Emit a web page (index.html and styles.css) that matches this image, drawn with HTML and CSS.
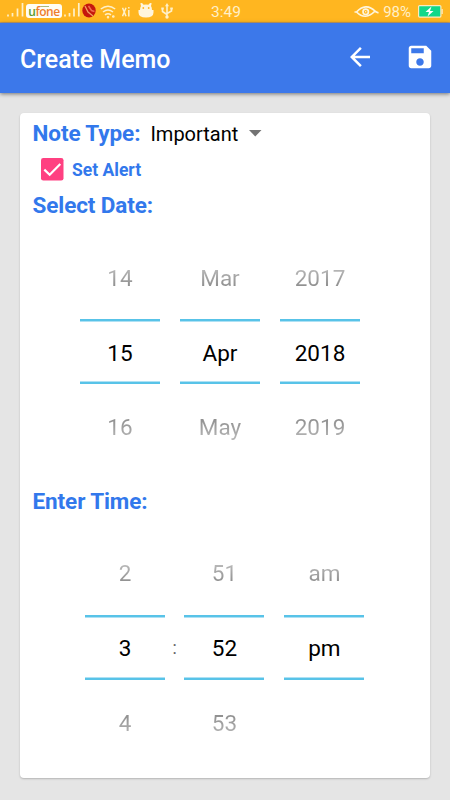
FILE: index.html
```html
<!DOCTYPE html>
<html lang="en">
<head>
<meta charset="utf-8">
<title>Create Memo</title>
<link rel="stylesheet" href="styles.css">
</head>
<body>
<div class="status">
  <div class="status-left">
    <svg class="signal" width="18" height="14" viewBox="0 0 18 14"><path d="M1 11.500v2M5.500 10v3.500M10.500 5.500v8M15.500 0v13.500" stroke="#fff0c8" stroke-width="1.700"/></svg>
    <span class="carrier"><small></small><b><i class="g">u</i><i class="o">fone</i></b></span>
    <svg class="signal second" width="17" height="14" viewBox="0 0 17 14"><path d="M1 11.500v2M5.500 10v3.500M10 5.500v8M14.800 0v13.500" stroke="#fff0c8" stroke-width="1.700"/></svg>
    <svg class="ball" width="14" height="15" viewBox="0 0 14 15"><ellipse cx="7" cy="7.500" rx="6.700" ry="7" fill="#c5170d"/><path d="M3 3L6 9L11 13" fill="none" stroke="#f0a060" stroke-width="1.300"/><path d="M6.500 3l3 4.500 3 1" fill="none" stroke="#f06b50" stroke-width="1.500"/></svg>
    <svg class="wifi" width="16" height="14" viewBox="0 0 16 14" fill="none" stroke="#fff0c8" stroke-width="1.500"><path d="M.8 4Q8-1.500 15.200 4M3 7Q8 3 13 7M5 9.800Q8 7.500 11 9.800"/><circle cx="8" cy="12.300" r=".5"/><circle cx="13.300" cy="11.500" r=".6"/></svg>
    <svg class="arrows" width="8" height="10" viewBox="0 0 8 10" fill="none" stroke="#fff0c8" stroke-width="1.500"><path d="M.500.700L4 9.300M4 .700L.500 9.300M6.800 3v6.500M6.800 0v1.500"/></svg>
    <svg class="cat" width="16" height="15" viewBox="0 0 16 15"><path d="M2.300.300L4 0L5.600 1.800Q8 1.200 10.400 1.800L12 0L13.700.300L13 3Q14 4.500 14 7H15.500V9.500Q15.500 14.500 8 14.500Q.500 14.500.500 9.500V7H2Q2 4.500 3 3Z" fill="#fff5dc"/><circle cx="5.300" cy="5" r=".9" fill="#ffb620"/><circle cx="10.700" cy="5" r=".9" fill="#ffb620"/></svg>
    <svg class="usb" width="12" height="16" viewBox="0 0 12 16" fill="none" stroke="#fff0c8" stroke-width="1.600"><path d="M6 2v12M6 11.500L1.500 8.500V5.500M6 10.500L10.500 8V5"/><path d="M6 0L4 3.200h4ZM.3 4.500h2.500v2H.3ZM9.300 4.500h2.500v2H9.300Z" fill="#fff0c8" stroke="none"/><circle cx="6" cy="14" r="1.700" fill="#fff0c8" stroke="none"/></svg>
  </div>
  <span class="clock">3:49</span>
  <div class="status-right">
    <svg width="25" height="12" viewBox="0 0 25 12" fill="none" stroke="#fff5dc" stroke-width="1.700"><path d="M.5 6H2.500Q11.500-3.800 21 5Q22 6.200 24.500 6.800M2.500 6Q11.500 15 21 5"/><circle cx="11.700" cy="5.800" r="2.700"/><circle cx="11.700" cy="5.800" r=".7" fill="#fff5dc" stroke="none"/></svg>
    <span class="percent">98%</span>
    <svg class="battery" width="25" height="13" viewBox="0 0 25 13"><rect x=".6" y=".6" width="22.300" height="11.500" rx="1" fill="#12d889" stroke="#ffe9bd" stroke-width="1.200"/><path d="M23.500 4h1.300v5h-1.300Z" fill="#ffe9bd"/><path d="M13.500 1.500L7.500 7H11L9.500 11.500L15.500 6H12Z" fill="#fff"/></svg>
  </div>
</div>
<header class="bar">
  <h1>Create Memo</h1>
  <svg class="back" width="30" height="30" viewBox="0 0 24 24"><path d="M20 11H7.830l5.590-5.590L12 4l-8 8 8 8 1.410-1.410L7.830 13H20z" fill="#fff"/></svg>
  <svg class="save" width="30" height="30" viewBox="0 0 24 24"><path d="M17 3H5c-1.110 0-2 .9-2 2v14c0 1.100.89 2 2 2h14c1.100 0 2-.9 2-2V7l-4-4zm-5 16c-1.660 0-3-1.340-3-3s1.340-3 3-3 3 1.340 3 3-1.340 3-3 3zm3-10H5V5h10v4z" fill="#fff"/></svg>
</header>
<main class="card">
  <div class="type-row">
    <span class="label">Note Type:</span>
    <span class="select">Important</span>
    <svg width="13" height="7" viewBox="0 0 13 7"><path d="M0 0H12.500L6.250 6.500Z" fill="#737373"/></svg>
  </div>
  <div class="alert-row">
    <svg width="23" height="23" viewBox="0 0 23 23"><rect width="22.500" height="22.500" rx="2.300" fill="#ff4081"/><path d="M3.300 11.600L8.700 16.800L19.300 6" fill="none" stroke="#fff" stroke-width="2.200"/></svg>
    <span>Set Alert</span>
  </div>
  <div class="label date-label">Select Date:</div>
  <div class="pickers date">
    <div class="picker"><span class="prev">14</span><span class="value">15</span><span class="next">16</span></div>
    <div class="picker"><span class="prev">Mar</span><span class="value">Apr</span><span class="next">May</span></div>
    <div class="picker"><span class="prev">2017</span><span class="value">2018</span><span class="next">2019</span></div>
  </div>
  <div class="label time-label">Enter Time:</div>
  <div class="pickers time">
    <div class="picker"><span class="prev">2</span><span class="value">3</span><span class="next">4</span></div>
    <span class="colon">:</span>
    <div class="picker"><span class="prev">51</span><span class="value">52</span><span class="next">53</span></div>
    <div class="picker meridiem"><span class="prev">am</span><span class="value">pm</span><span class="next"></span></div>
  </div>
</main>
</body>
</html>
```
FILE: styles.css
```css
* { box-sizing: border-box; }
body {
  margin: 0;
  width: 450px;
  height: 800px;
  overflow: hidden;
  background: #e5e5e5;
  font-family: Roboto, sans-serif;
  color: #000;
}
svg { display: block; flex: none; }
.status {
  height: 23px;
  display: grid;
  grid-template-columns: 211px 1fr auto;
  align-items: center;
  background: #ffb620;
  border-bottom: 1px solid #c29c68;
  color: #fff0c8;
  font-size: 15.5px;
}
.status-left { display: flex; align-items: center; padding: 0 0 2px 7px; }
.status-left .signal { margin-top: -1px; }
.carrier {
  width: 36px;
  height: 14px;
  margin-left: 1px;
  background: #fffdf4;
  border-radius: 3px;
  text-align: center;
  display: flex;
  flex-direction: column;
  align-items: center;
  flex: none;
}
.carrier small { width: 10px; height: 1px; margin-top: 2px; background: #a9b97c; flex: none; }
.carrier b { font: 600 12px/11px "Open Sans", sans-serif; letter-spacing: -.5px; margin-top: -1px; }
.carrier i { font-style: normal; }
.carrier .g { color: #5a9b2d; }
.carrier .o { color: #ee7d2d; }
.status-left .second { margin-left: 2px; }
.ball { margin-left: 1px; }
.wifi { margin: 2px 0 0 4px; }
.arrows { margin: 2px 0 0 6px; }
.cat { margin-left: 8px; }
.usb { margin-left: 7px; }
.clock { padding-top: 1px; line-height: 22px; }
.status-right { display: flex; align-items: center; padding-right: 7px; }
.percent { margin-left: 4px; font-size: 15px; line-height: 22px; }
.battery { margin-left: 7px; }
.bar {
  height: 69.5px;
  display: flex;
  align-items: center;
  padding: 1px 15px 0 20px;
  background: #3c78ea;
  color: #fff;
  box-shadow: 0 1px 4px rgba(0, 0, 0, .5);
}
.bar h1 { flex: 1; margin: 3px 0 0; font-size: 25px; font-weight: 500; line-height: 30px; letter-spacing: -.05px; }
.bar .save { margin-left: 30px; }
.bar svg { margin-top: -2px; }
.card {
  width: 410px;
  height: 665px;
  margin: 20px 20px 0;
  background: #fff;
  border-radius: 4px;
  box-shadow: 0 1px 2px rgba(0, 0, 0, .22);
}
.label { color: #3278ec; font-size: 22.5px; font-weight: 700; line-height: 28px; letter-spacing: -.1px; }
.type-row { display: flex; align-items: center; height: 42px; padding: 0 0 1px 12.5px; }
.select { margin: 1px 0 0 10px; font-size: 20px; line-height: 28px; }
.type-row svg { margin-left: 10.5px; }
.alert-row {
  display: flex;
  align-items: center;
  height: 30px;
  padding-left: 21px;
  color: #3278ec;
  font-size: 17.5px;
  font-weight: 700;
}
.alert-row svg { margin-top: -1px; }
.alert-row span { margin-left: 8px; }
.date-label { height: 54px; padding: 6px 0 0 12.5px; }
.pickers { display: flex; height: 225px; font-size: 22.5px; }
.pickers.date { gap: 20px; padding-left: 60px; margin-top: 1px; }
.picker { width: 80px; display: flex; flex-direction: column; text-align: center; }
.prev, .next {
  color: transparent;
  background-clip: text;
  -webkit-background-clip: text;
}
.prev { height: 79px; line-height: 76px; background-image: linear-gradient(#c8c8c8 22px, #868686 50px); }
.value {
  height: 65px;
  line-height: 67px;
  background: linear-gradient(#58c3e8 2px, #aee1f4 2px 3px, transparent 3px 62px, #aee1f4 62px 63px, #58c3e8 63px);
}
.date .value { line-height: 69px; }
.next { height: 79px; line-height: 87px; background-image: linear-gradient(#868686 30px, #c4c4c4 62px); }
.time-label { height: 69px; padding: 22px 0 0 12.5px; }
.pickers.time { padding-left: 65px; margin-top: 2px; }
.time .prev { line-height: 74px; }
.colon { width: 19.4px; text-align: center; font-size: 17.5px; line-height: 224px; color: #666; }
.meridiem { margin-left: 20px; }
```
